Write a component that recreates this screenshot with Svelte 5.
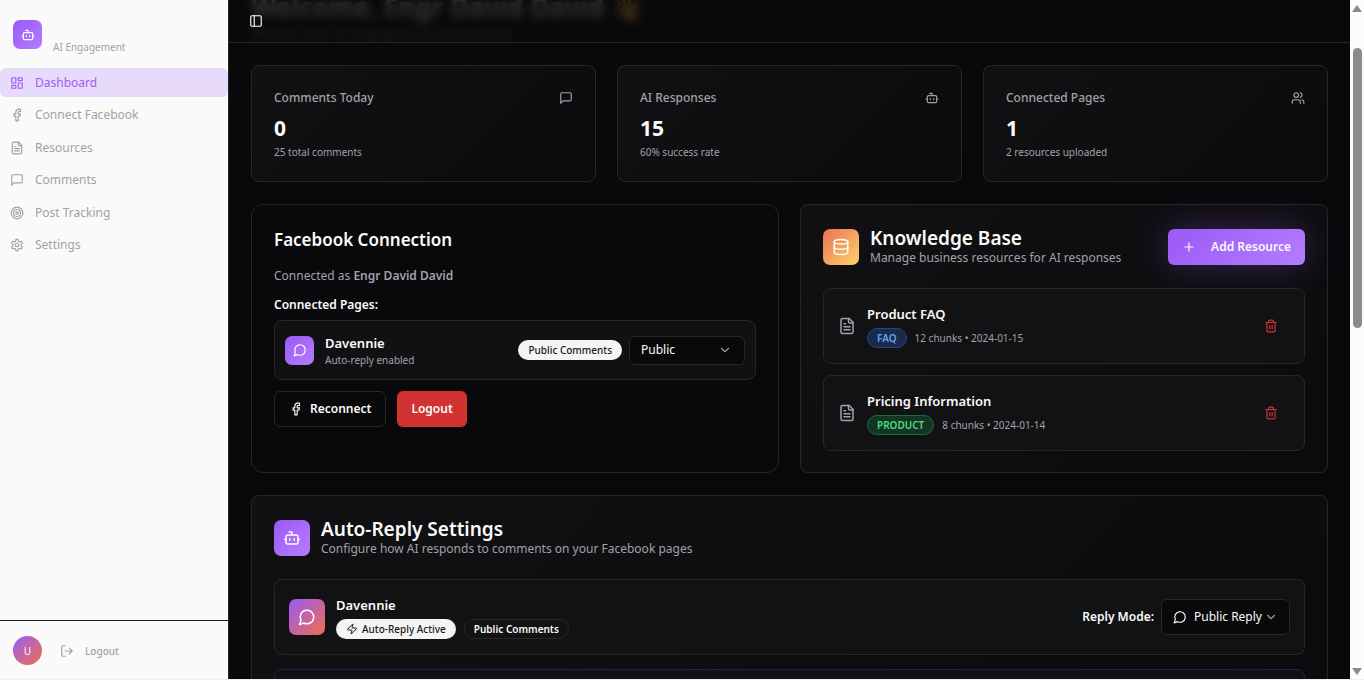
<script lang="ts">
	type IconName = keyof typeof icons;

	const icons = {
		bot: '<path d="M12 8V4H8"/><rect width="16" height="12" x="4" y="8" rx="2"/><path d="M2 14h2M20 14h2M15 13v2M9 13v2"/>',
		dashboard:
			'<rect width="7" height="9" x="3" y="3" rx="1"/><rect width="7" height="5" x="14" y="3" rx="1"/><rect width="7" height="9" x="14" y="12" rx="1"/><rect width="7" height="5" x="3" y="16" rx="1"/>',
		facebook: '<path d="M18 2h-3a5 5 0 0 0-5 5v3H7v4h3v8h4v-8h3l1-4h-4V7a1 1 0 0 1 1-1h3z"/>',
		file: '<path d="M15 2H6a2 2 0 0 0-2 2v16a2 2 0 0 0 2 2h12a2 2 0 0 0 2-2V7Z"/><path d="M14 2v4a2 2 0 0 0 2 2h4M10 9H8M16 13H8M16 17H8"/>',
		message: '<path d="M21 15a2 2 0 0 1-2 2H7l-4 4V5a2 2 0 0 1 2-2h14a2 2 0 0 1 2 2z"/>',
		target: '<circle cx="12" cy="12" r="10"/><circle cx="12" cy="12" r="6"/><circle cx="12" cy="12" r="2"/>',
		settings:
			'<path d="M12.22 2h-.44a2 2 0 0 0-2 2v.18a2 2 0 0 1-1 1.73l-.43.25a2 2 0 0 1-2 0l-.15-.08a2 2 0 0 0-2.73.73l-.22.38a2 2 0 0 0 .73 2.73l.15.1a2 2 0 0 1 1 1.72v.51a2 2 0 0 1-1 1.74l-.15.09a2 2 0 0 0-.73 2.73l.22.38a2 2 0 0 0 2.73.73l.15-.08a2 2 0 0 1 2 0l.43.25a2 2 0 0 1 1 1.73V20a2 2 0 0 0 2 2h.44a2 2 0 0 0 2-2v-.18a2 2 0 0 1 1-1.73l.43-.25a2 2 0 0 1 2 0l.15.08a2 2 0 0 0 2.73-.73l.22-.39a2 2 0 0 0-.73-2.73l-.15-.08a2 2 0 0 1-1-1.74v-.5a2 2 0 0 1 1-1.74l.15-.09a2 2 0 0 0 .73-2.73l-.22-.38a2 2 0 0 0-2.73-.73l-.15.08a2 2 0 0 1-2 0l-.43-.25a2 2 0 0 1-1-1.73V4a2 2 0 0 0-2-2z"/><circle cx="12" cy="12" r="3"/>',
		logout: '<path d="M9 21H5a2 2 0 0 1-2-2V5a2 2 0 0 1 2-2h4M16 17l5-5-5-5M21 12H9"/>',
		panel: '<rect width="18" height="18" x="3" y="3" rx="2"/><path d="M9 3v18"/>',
		users: '<path d="M16 21v-2a4 4 0 0 0-4-4H6a4 4 0 0 0-4 4v2"/><circle cx="9" cy="7" r="4"/><path d="M22 21v-2a4 4 0 0 0-3-3.87M16 3.13a4 4 0 0 1 0 7.75"/>',
		bubble: '<path d="M7.9 20A9 9 0 1 0 4 16.1L2 22Z"/>',
		database: '<ellipse cx="12" cy="5" rx="9" ry="3"/><path d="M3 5v14a9 3 0 0 0 18 0V5"/><path d="M3 12a9 3 0 0 0 18 0"/>',
		plus: '<path d="M5 12h14M12 5v14"/>',
		trash: '<path d="M3 6h18M19 6v14a2 2 0 0 1-2 2H7a2 2 0 0 1-2-2V6M8 6V4a2 2 0 0 1 2-2h4a2 2 0 0 1 2 2v2M10 11v6M14 11v6"/>',
		zap: '<path d="M4 14a1 1 0 0 1-.78-1.63l9.9-10.2a.5.5 0 0 1 .86.46l-1.92 6.02A1 1 0 0 0 13 10h7a1 1 0 0 1 .78 1.63l-9.9 10.2a.5.5 0 0 1-.86-.46l1.92-6.02A1 1 0 0 0 11 14z"/>',
		chevron: '<path d="m6 9 6 6 6-6"/>'
	};

	const menu: { label: string; icon: IconName }[] = [
		{ label: 'Dashboard', icon: 'dashboard' },
		{ label: 'Connect Facebook', icon: 'facebook' },
		{ label: 'Resources', icon: 'file' },
		{ label: 'Comments', icon: 'message' },
		{ label: 'Post Tracking', icon: 'target' },
		{ label: 'Settings', icon: 'settings' }
	];

	const stats: { title: string; value: number; note: string; icon: IconName }[] = [
		{ title: 'Comments Today', value: 0, note: '25 total comments', icon: 'message' },
		{ title: 'AI Responses', value: 15, note: '60% success rate', icon: 'bot' },
		{ title: 'Connected Pages', value: 1, note: '2 resources uploaded', icon: 'users' }
	];

	let resources = $state([
		{ id: 1, name: 'Product FAQ', type: 'faq', chunks: 12, date: '2024-01-15' },
		{ id: 2, name: 'Pricing Information', type: 'product', chunks: 8, date: '2024-01-14' }
	]);

	let active = $state('Dashboard');
	let pageMode = $state('public');
	let replyMode = $state('public');

	function removeResource(id: number) {
		resources = resources.filter((r) => r.id !== id);
	}
</script>

{#snippet icon(name: IconName, size = 14)}
	<svg
		class="icon"
		width={size}
		height={size}
		viewBox="0 0 24 24"
		fill="none"
		stroke="currentColor"
		stroke-width="2"
		stroke-linecap="round"
		stroke-linejoin="round"
		aria-hidden="true"
	>
		{@html icons[name]}
	</svg>
{/snippet}

<div class="shell">
	<aside class="sidebar">
		<div class="brand">
			<span class="tile tile--small">{@render icon('bot')}</span>
			<span class="brand-note">AI Engagement</span>
		</div>

		<nav class="menu">
			{#each menu as item}
				<a
					href="#{item.label.toLowerCase().replace(' ', '-')}"
					class="menu-item"
					class:menu-item--active={active === item.label}
					onclick={() => (active = item.label)}
				>
					{@render icon(item.icon)}
					{item.label}
				</a>
			{/each}
		</nav>

		<div class="account">
			<span class="avatar">U</span>
			<button class="account-logout">{@render icon('logout')} Logout</button>
		</div>
	</aside>

	<div class="main">
		<header class="topbar">
			<button class="toggle" aria-label="Toggle sidebar">{@render icon('panel')}</button>
		</header>

		<main class="content">
			<div class="welcome">
				<h1>Welcome, Engr David David <span class="wave">👋</span></h1>
				<p>Monitor your AI engagement performance</p>
			</div>

			<section class="stats">
				{#each stats as stat}
					<article class="card stat">
						<div class="stat-head">
							<h3>{stat.title}</h3>
							{@render icon(stat.icon)}
						</div>
						<div class="stat-value">{stat.value}</div>
						<p class="small">{stat.note}</p>
					</article>
				{/each}
			</section>

			<div class="columns">
				<section class="card card--flat">
					<h2 class="connection-title">Facebook Connection</h2>
					<p class="connected-as">Connected as <strong>Engr David David</strong></p>
					<h4 class="pages-label">Connected Pages:</h4>

					<div class="page-row">
						<span class="tile tile--small">{@render icon('bubble')}</span>
						<div class="grow">
							<div class="name">Davennie</div>
							<p class="small">Auto-reply enabled</p>
						</div>
						<span class="badge badge--light">Public Comments</span>
						<div class="select">
							<select bind:value={pageMode} aria-label="Comment mode">
								<option value="public">Public</option>
								<option value="private">Private</option>
							</select>
							{@render icon('chevron')}
						</div>
					</div>

					<div class="actions">
						<button class="btn btn--outline">{@render icon('facebook')} Reconnect</button>
						<button class="btn btn--danger">Logout</button>
					</div>
				</section>

				<section class="card">
					<div class="section-head">
						<span class="tile tile--warm">{@render icon('database', 18)}</span>
						<div class="grow">
							<h2 class="section-title">Knowledge Base</h2>
							<p class="section-note">Manage business resources for AI responses</p>
						</div>
						<button class="btn btn--primary">{@render icon('plus')} Add Resource</button>
					</div>

					<ul class="resources">
						{#each resources as resource (resource.id)}
							<li class="row">
								<span class="muted">{@render icon('file', 18)}</span>
								<div class="grow">
									<div class="name">{resource.name}</div>
									<div class="tags">
										<span class="badge badge--{resource.type}">{resource.type.toUpperCase()}</span>
										<span class="small">{resource.chunks} chunks • {resource.date}</span>
									</div>
								</div>
								<button
									class="remove"
									aria-label="Delete {resource.name}"
									onclick={() => removeResource(resource.id)}
								>
									{@render icon('trash')}
								</button>
							</li>
						{/each}
					</ul>
				</section>
			</div>

			<section class="card">
				<div class="section-head">
					<span class="tile">{@render icon('bot', 18)}</span>
					<div class="grow">
						<h2 class="section-title">Auto-Reply Settings</h2>
						<p class="section-note">Configure how AI responds to comments on your Facebook pages</p>
					</div>
				</div>

				<div class="row">
					<span class="tile tile--mixed">{@render icon('bubble', 18)}</span>
					<div class="grow">
						<div class="name">Davennie</div>
						<div class="tags">
							<span class="badge badge--light">{@render icon('zap', 12)} Auto-Reply Active</span>
							<span class="badge badge--outline">Public Comments</span>
						</div>
					</div>
					<label class="mode-label" for="reply-mode">Reply Mode:</label>
					<div class="select select--tall">
						{@render icon('bubble')}
						<select id="reply-mode" bind:value={replyMode}>
							<option value="public">Public Reply</option>
							<option value="dm">Private DM</option>
						</select>
						{@render icon('chevron')}
					</div>
				</div>

				<div class="row row--accent"></div>
			</section>
		</main>
	</div>

	<div class="scrollbar" aria-hidden="true">
		<span class="arrow arrow--up"></span>
		<span class="thumb"></span>
		<span class="arrow arrow--down"></span>
	</div>
</div>

<style>
	:global(body) {
		margin: 0;
		background: #09090b;
		overflow: hidden;
	}

	.shell {
		display: flex;
		box-sizing: border-box;
		height: 100vh;
		border-bottom: 1px solid #f1f1f2;
		font-family: 'Noto Sans', 'Open Sans', sans-serif;
		font-size: 12px;
		line-height: 18px;
		color: #fafafa;
		background: #09090b;
	}

	.shell :is(h1, h2, h3, h4, p, ul) {
		margin: 0;
		padding: 0;
	}

	button,
	select {
		font: inherit;
		color: inherit;
		background: none;
		border: none;
		padding: 0;
		cursor: pointer;
	}

	.icon {
		display: block;
		flex-shrink: 0;
	}

	.grow {
		flex: 1;
		min-width: 0;
	}

	/* Sidebar */
	.sidebar {
		width: 228px;
		flex-shrink: 0;
		display: flex;
		flex-direction: column;
		background: #fafafa;
		border-right: 1px solid #27272a;
		color: #a1a1aa;
	}

	.brand {
		display: flex;
		align-items: flex-end;
		gap: 11px;
		padding: 20px 13px 19px;
	}

	.brand-note {
		font-size: 10px;
		line-height: 14px;
		margin-bottom: -5px;
	}

	.menu {
		display: flex;
		flex-direction: column;
		justify-content: space-between;
		height: 192px;
	}

	.menu-item {
		display: flex;
		align-items: center;
		gap: 11px;
		height: 29px;
		padding: 0 10px;
		border-radius: 6px;
		color: inherit;
		text-decoration: none;
	}

	.menu-item--active {
		background: #e8dafa;
		color: #9d5cf6;
	}

	.account {
		display: flex;
		align-items: center;
		gap: 18px;
		margin-top: auto;
		padding: 15px 13px 14px;
		border-top: 1px solid #18181b;
	}

	.avatar {
		width: 29px;
		height: 29px;
		border-radius: 50%;
		display: grid;
		place-items: center;
		background: linear-gradient(135deg, #9b5cf6, #ed6f50);
		color: #fff;
		font-size: 10px;
	}

	.account-logout {
		display: flex;
		align-items: center;
		gap: 11px;
		font-size: 10px;
		font-weight: 500;
	}

	/* Top bar */
	.main {
		position: relative;
		flex: 1;
		min-width: 0;
		overflow: hidden;
	}

	.topbar {
		position: absolute;
		inset: 0 0 auto;
		z-index: 2;
		height: 42px;
		padding: 0 20px;
		display: flex;
		align-items: center;
		border-bottom: 1px solid #27272a;
		background: rgba(9, 9, 11, 0.84);
		backdrop-filter: blur(4px);
	}

	.toggle {
		display: flex;
	}

	/* Content, scrolled past the top of the welcome block */
	.content {
		display: flex;
		flex-direction: column;
		gap: 22px;
		margin-top: -10px;
		padding: 0 22px;
	}

	.welcome {
		height: 53px;
	}

	.welcome h1 {
		font-size: 26px;
		line-height: 34px;
		font-weight: 700;
	}

	.welcome p {
		font-size: 13px;
		line-height: 18px;
		color: #a1a1aa;
	}

	.wave {
		color: #fbbf24;
	}

	.card {
		border: 1px solid #27272a;
		border-radius: 8px;
		padding: 22px 22px 21px;
		background: linear-gradient(135deg, #111113, #0b0b0d);
	}

	.card--flat {
		border-radius: 12px;
		background: #09090b;
	}

	.stats {
		display: grid;
		grid-template-columns: repeat(3, 1fr);
		gap: 21px;
	}

	.stat-head {
		display: flex;
		align-items: center;
		justify-content: space-between;
		color: #a1a1aa;
	}

	.stat-head h3 {
		font-size: 12px;
		line-height: 20px;
		font-weight: 500;
	}

	.stat-value {
		margin: 6px 0 3px;
		font-size: 21px;
		line-height: 28px;
		font-weight: 700;
	}

	.small {
		font-size: 10px;
		line-height: 15px;
		color: #a1a1aa;
	}

	.muted {
		color: #a1a1aa;
	}

	.columns {
		display: grid;
		grid-template-columns: repeat(2, 1fr);
		gap: 21px;
	}

	/* Facebook connection */
	.connection-title {
		font-size: 17px;
		line-height: 26px;
		font-weight: 600;
	}

	.shell .connected-as {
		padding-top: 14px;
		color: #a1a1aa;
	}

	.connected-as strong {
		font-weight: 600;
	}

	.shell .pages-label {
		padding: 11px 0 6px;
		font-size: 12px;
		font-weight: 600;
	}

	.page-row {
		display: flex;
		align-items: center;
		gap: 7px;
		height: 58px;
		padding: 0 10px;
		border: 1px solid #27272a;
		border-radius: 8px;
		background: #111113;
	}

	.page-row .tile {
		margin-right: 4px;
	}

	.name {
		font-size: 13px;
		line-height: 20px;
		font-weight: 600;
	}

	.actions {
		display: flex;
		gap: 11px;
		margin-top: 11px;
	}

	.btn {
		display: flex;
		align-items: center;
		height: 36px;
		padding: 0 14px;
		border-radius: 6px;
		font-weight: 600;
	}

	.btn--outline {
		gap: 7px;
		border: 1px solid #27272a;
	}

	.btn--danger {
		background: #d13232;
	}

	.btn--primary {
		gap: 15px;
		background: linear-gradient(135deg, #9b59f6, #b47dff);
		box-shadow: 0 0 36px rgba(155, 89, 246, 0.3);
	}

	/* Section heads and rows */
	.tile {
		width: 36px;
		height: 36px;
		flex-shrink: 0;
		display: grid;
		place-items: center;
		border-radius: 7px;
		background: linear-gradient(135deg, #9b59f6, #b47dff);
		color: #fff;
	}

	.tile--small {
		width: 29px;
		height: 29px;
	}

	.tile--warm {
		background: linear-gradient(135deg, #ed7053, #fbd46c);
	}

	.tile--mixed {
		background: linear-gradient(135deg, #9b59f6, #ed6f50);
	}

	.section-head {
		display: flex;
		align-items: center;
		gap: 11px;
		height: 40px;
		margin-bottom: 21px;
	}

	.section-title {
		font-size: 19px;
		line-height: 22px;
		font-weight: 600;
	}

	.section-note {
		color: #a1a1aa;
	}

	.resources {
		display: grid;
		gap: 11px;
		list-style: none;
	}

	.row {
		display: flex;
		align-items: center;
		gap: 11px;
		box-sizing: border-box;
		height: 76px;
		padding: 0 14px;
		border: 1px solid #27272a;
		border-radius: 8px;
		background: #121214;
	}

	.row--accent {
		margin-top: 14px;
		border-color: #2b1f40;
		background: #130f1a;
	}

	.tags {
		display: flex;
		align-items: center;
		gap: 8px;
		margin-top: 4px;
	}

	.badge {
		display: inline-flex;
		align-items: center;
		gap: 4px;
		box-sizing: border-box;
		height: 20px;
		padding: 0 9px;
		border: 1px solid transparent;
		border-radius: 10px;
		font-size: 10px;
		line-height: 15px;
		font-weight: 500;
		white-space: nowrap;
	}

	.badge--light {
		background: #f4f4f5;
		color: #18181b;
	}

	.badge--outline {
		border-color: #27272a;
		font-weight: 600;
	}

	.badge--faq {
		background: #1a2a48;
		border-color: #234584;
		color: #60a5fa;
		font-weight: 600;
	}

	.badge--product {
		background: #153524;
		border-color: #1b6b38;
		color: #4ade80;
		font-weight: 600;
	}

	.remove {
		display: grid;
		place-items: center;
		width: 38px;
		height: 32px;
		color: #d13232;
	}

	.mode-label {
		font-weight: 600;
		margin-right: -4px;
	}

	.select {
		display: flex;
		align-items: center;
		box-sizing: border-box;
		width: 116px;
		height: 29px;
		padding-right: 12px;
		border: 1px solid #27272a;
		border-radius: 6px;
		background: #09090b;
	}

	.select select {
		appearance: none;
		flex: 1;
		min-width: 0;
		height: 100%;
		padding-left: 11px;
	}

	.select .icon:last-child {
		opacity: 0.6;
		pointer-events: none;
	}

	.select--tall {
		width: 129px;
		height: 36px;
		padding: 0 11px;
	}

	.select--tall select {
		padding-left: 7px;
	}

	/* Scrollbar column */
	.scrollbar {
		width: 14px;
		flex-shrink: 0;
		display: flex;
		flex-direction: column;
		align-items: center;
		background: #fcfcfc;
	}

	.thumb {
		width: 9px;
		height: 280px;
		margin-top: 36px;
		border-radius: 5px;
		background: #8b8b8b;
	}

	.arrow {
		border: 5px solid transparent;
	}

	.arrow--up {
		border-top: 0;
		border-bottom: 7px solid #8b8b8b;
		margin-top: 5px;
	}

	.arrow--down {
		border-bottom: 0;
		border-top: 7px solid #8b8b8b;
		margin: auto 0 4px;
	}
</style>
